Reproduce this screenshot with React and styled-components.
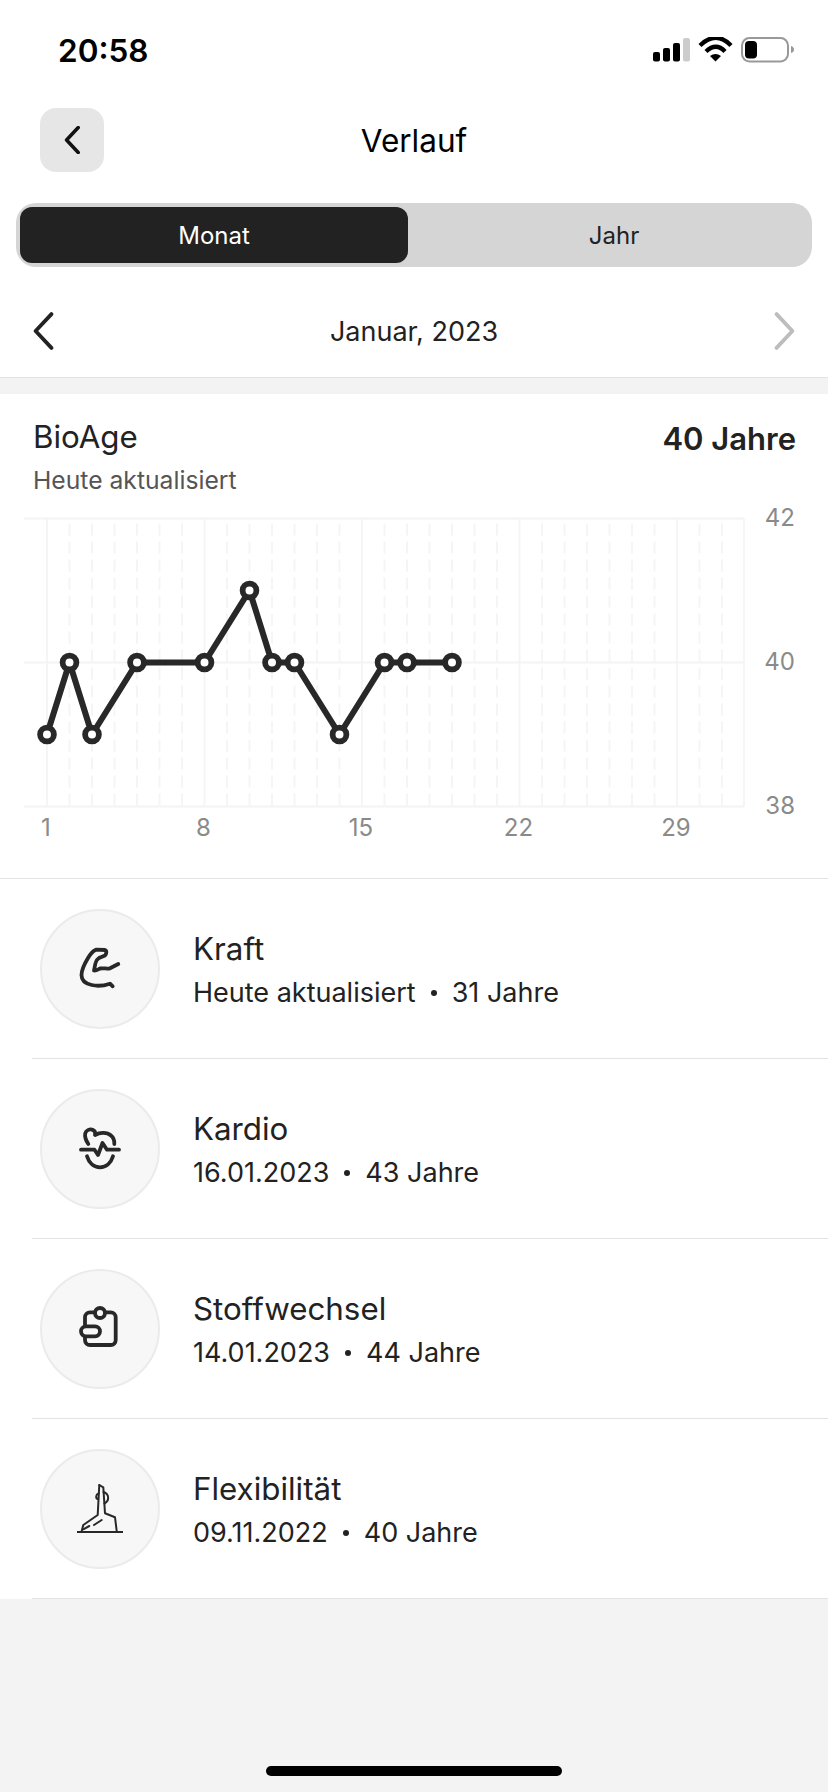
import React from 'react';
import styled, { createGlobalStyle } from 'styled-components';

const GlobalStyle = createGlobalStyle`
  html, body {
    margin: 0;
    padding: 0;
    background: #f3f3f3;
  }
  * {
    box-sizing: border-box;
  }
`;

const Page = styled.div`
  width: 828px;
  height: 1792px;
  overflow: hidden;
  display: flex;
  flex-direction: column;
  background: #f3f3f3;
  color: #222;
  font-family: Inter, "Liberation Sans", sans-serif;
`;

const TopBlock = styled.div`
  background: #fff;
  border-bottom: 1px solid #e3e3e3;
`;

const StatusBar = styled.div`
  height: 100px;
  padding: 26px 34px 0 58px;
  display: flex;
  justify-content: space-between;
  align-items: flex-start;
`;

const Time = styled.div`
  font-size: 31.5px;
  line-height: 50px;
  font-weight: 600;
  color: #000;
`;

const StatusIcons = styled.svg`
  display: block;
  margin-top: 11px;
`;

const Header = styled.div`
  height: 64px;
  margin: 8px 40px 0;
  position: relative;
  display: flex;
  align-items: center;
  justify-content: center;
`;

const BackButton = styled.button`
  position: absolute;
  left: 0;
  top: 0;
  width: 64px;
  height: 64px;
  border: 0;
  padding: 0;
  border-radius: 16px;
  background: #e6e6e6;
  display: flex;
  align-items: center;
  justify-content: center;
`;

const Title = styled.div`
  font-size: 31.5px;
  font-weight: 420;
  color: #000;
`;

const Segments = styled.div`
  height: 64px;
  margin: 31px 16px 0;
  padding: 4px;
  border-radius: 20px;
  background: #d5d5d5;
  display: flex;
`;

const Segment = styled.div`
  width: ${(p) => (p.$active ? '388px' : '400px')};
  padding-left: ${(p) => (p.$active ? '0' : '12px')};
  border-radius: 12px;
  display: flex;
  align-items: center;
  justify-content: center;
  font-size: 24px;
  background: ${(p) => (p.$active ? '#222' : 'transparent')};
  color: ${(p) => (p.$active ? '#fff' : '#222')};
`;

const DateRow = styled.div`
  height: 110px;
  padding: 18px 32px 0;
  display: flex;
  align-items: center;
  justify-content: space-between;
  font-size: 27px;
  color: #222;
`;

const Card = styled.section`
  margin-top: 16px;
  background: #fff;
  height: 485px;
  border-bottom: 1px solid #e3e3e3;
  display: flex;
  flex-direction: column;
`;

const CardHead = styled.div`
  padding: 24px 32px 0 33px;
  height: 124px;
  display: flex;
  justify-content: space-between;
  align-items: flex-start;
`;

const CardTitle = styled.div`
  font-size: 31.3px;
  line-height: 38px;
  font-weight: 420;
`;

const CardSub = styled.div`
  margin-top: 8px;
  font-size: 24.7px;
  line-height: 32px;
  color: #555;
`;

const CardValue = styled.div`
  margin-top: 2px;
  font-size: 31px;
  line-height: 38px;
  font-weight: 600;
`;

const ChartSvg = styled.svg`
  display: block;
  overflow: visible;
`;

const AxisText = styled.text`
  font-family: Inter, "Liberation Sans", sans-serif;
  font-size: 24px;
  fill: #8a8a8a;
`;

const List = styled.div`
  background: #fff;
  padding-left: 32px;
`;

const Row = styled.div`
  height: 180px;
  padding-left: 8px;
  border-bottom: 1px solid #e3e3e3;
  display: flex;
  align-items: center;
  gap: 33px;
`;

const IconCircle = styled.div`
  width: 120px;
  height: 120px;
  border-radius: 50%;
  background: #f7f7f7;
  border: 2px solid #ebebeb;
  display: flex;
  align-items: center;
  justify-content: center;
  flex-shrink: 0;
`;

const RowText = styled.div`
  margin-top: 2px;
`;

const RowTitle = styled.div`
  font-size: 31.3px;
  line-height: 40px;
  font-weight: 420;
`;

const RowSub = styled.div`
  margin-top: 6px;
  font-size: 27px;
  line-height: 36px;
  display: flex;
  align-items: center;
`;

const Dot = styled.span`
  width: 6px;
  height: 6px;
  border-radius: 50%;
  background: #222;
  margin: 0 15px;
`;

const Spacer = styled.div`
  flex: 1;
`;

const HomeIndicator = styled.div`
  width: 296px;
  height: 10px;
  border-radius: 5px;
  background: #000;
  margin: 0 auto 16px;
`;

const StatusGlyphs = () => (
  <StatusIcons width="141" height="26" viewBox="653 37 141 26">
    <rect x="653" y="52" width="7" height="9.5" rx="2" fill="#000" />
    <rect x="663" y="48" width="7" height="13.5" rx="2" fill="#000" />
    <rect x="673" y="43" width="7" height="18.5" rx="2" fill="#000" />
    <rect x="683" y="38" width="7" height="23.5" rx="2" fill="#ccc" />
    <path d="M700 45.5 Q716 30 731 45.5" fill="none" stroke="#000" strokeWidth="4.4" />
    <path d="M706 51.5 Q716 42 725 51.5" fill="none" stroke="#000" strokeWidth="4.4" />
    <path d="M710 56 Q715.500 52 721 56 L715.500 61.500 Z" fill="#000" />
    <rect x="742" y="38" width="46" height="23.500" rx="7.500" fill="none" stroke="#999" strokeWidth="2" />
    <rect x="745" y="41" width="12" height="17.500" rx="4" fill="#000" />
    <path d="M791 46 Q794 47 794 49.500 Q794 52 791 53 Z" fill="#999" />
  </StatusIcons>
);

const Chevron = ({ left, color, width, height, stroke }) => (
  <svg width={width} height={height} viewBox="0 0 20 36">
    <path
      d={left ? 'M18 2 L3 18 L18 34' : 'M2 2 L17 18 L2 34'}
      fill="none"
      stroke={color}
      strokeWidth={stroke}
      strokeLinecap="round"
      strokeLinejoin="round"
    />
  </svg>
);

const days = [1, 2, 3, 5, 8, 10, 11, 12, 14, 16, 17, 19];
const values = [39, 40, 39, 40, 40, 41, 40, 40, 39, 40, 40, 40];
const dayX = (d) => 47 + (d - 1) * 22.5;
const valueY = (v) => 144 - (v - 40) * 72;
const majorDays = [1, 8, 15, 22, 29];

const Chart = () => {
  const grid = [];
  for (let d = 1; d <= 31; d++) {
    const major = majorDays.includes(d);
    grid.push(
      <line
        key={d}
        x1={dayX(d)}
        x2={dayX(d)}
        y1={major ? 0 : 5}
        y2={288}
        stroke="#f5f5f5"
        strokeWidth="2"
        strokeDasharray={major ? undefined : '12 6'}
      />
    );
  }
  const points = days.map((d, i) => `${dayX(d)},${valueY(values[i])}`).join(' ');

  return (
    <ChartSvg width="828" height="346" viewBox="0 0 828 346">
      <g transform="translate(0 0.5)">
        {grid}
        <line x1="744" x2="744" y1="0" y2="288" stroke="#f5f5f5" strokeWidth="2" />
        {[0, 144, 288].map((y) => (
          <line key={y} x1="24" x2="744" y1={y} y2={y} stroke="#f4f4f4" strokeWidth="2" />
        ))}
        <polyline points={points} fill="none" stroke="#282828" strokeWidth="6" strokeLinejoin="round" />
        {days.map((d, i) => (
          <circle key={d} cx={dayX(d)} cy={valueY(values[i])} r="6.9" fill="#fff" stroke="#282828" strokeWidth="5.8" />
        ))}
      </g>
      {[['42', 8], ['40', 152], ['38', 296]].map(([t, y]) => (
        <AxisText key={t} x="795" y={y} textAnchor="end">{t}</AxisText>
      ))}
      {majorDays.map((d) => (
        <AxisText key={d} x={d === 1 ? 46 : dayX(d) - 1} y="318" textAnchor="middle">{d}</AxisText>
      ))}
    </ChartSvg>
  );
};

const iconStroke = {
  fill: 'none',
  stroke: '#282828',
  strokeLinecap: 'round',
  strokeLinejoin: 'round',
};

const KraftIcon = () => (
  <svg width="48" height="48" viewBox="0 0 48 48">
    <path
      {...iconStroke}
      strokeWidth="3.8"
      d="M36.700 41.300 L34 38.700 C28 40.700 21 41.300 15.700 40 C9 38.500 5.500 35 5.500 30 C5.500 24 9 18 12 13 C14 9.500 17 6 20 4.700 L29 5 C31 5.500 30.500 9 29 10.500 L23 13 C21.500 14 20 15 19.500 18 L18 25.500 C20 26 22 24.500 24 23.500 C28 23 31 24 34 23.300 L42.300 19"
    />
  </svg>
);

const KardioIcon = () => (
  <svg width="48" height="48" viewBox="0 0 48 48">
    <g {...iconStroke} strokeWidth="3.8">
      <path d="M12.300 19 C10 15.500 8.500 12 9.200 8.500 C10 5 14 3.500 17 5 C19 6 19.500 8 19 10 C24 7 31 7 35 10.500 C38 13 38.500 16 38.300 19" />
      <path d="M5 24.700 H18.500 L22 30 L26.500 18 L31 24.700 H43" />
      <path d="M11 31.300 C13 38 18 42.300 24 42.300 C30 42.300 35 38 37 31.300" />
    </g>
  </svg>
);

const StoffwechselIcon = () => (
  <svg width="48" height="48" viewBox="0 0 48 48">
    <g {...iconStroke} strokeWidth="3.8">
      <rect x="9" y="7.300" width="30.700" height="32.700" rx="5" />
      <circle cx="24" cy="8" r="5" fill="#f7f7f7" />
      <rect x="5" y="21.300" width="19" height="10" rx="5" fill="#f7f7f7" />
    </g>
  </svg>
);

const FlexIcon = () => (
  <svg width="48" height="48" viewBox="0 0 48 48" overflow="visible">
    <g {...iconStroke} strokeWidth="2">
      <path strokeLinecap="butt" d="M1 47 H47" />
      <path d="M23.300 0 L21.700 30 L7.300 40 L5.700 46" />
      <path d="M23.300 0 L27.300 2.300 L29 28.300 L39 32.300 L40.700 46" />
      <path d="M22.500 8.500 C19.500 9.500 19.500 13.500 22 14" />
      <path d="M27.500 7 C33.500 9 33.500 16 28.500 18.500" />
      <path d="M18 40 L25.700 35" />
      <path d="M7.300 44.300 L13.300 41" />
    </g>
  </svg>
);

const rows = [
  { title: 'Kraft', date: 'Heute aktualisiert', age: '31 Jahre', Icon: KraftIcon },
  { title: 'Kardio', date: '16.01.2023', age: '43 Jahre', Icon: KardioIcon },
  { title: 'Stoffwechsel', date: '14.01.2023', age: '44 Jahre', Icon: StoffwechselIcon },
  { title: 'Flexibilität', date: '09.11.2022', age: '40 Jahre', Icon: FlexIcon },
];

export default function App() {
  return (
    <Page>
      <GlobalStyle />
      <TopBlock>
        <StatusBar>
          <Time>20:58</Time>
          <StatusGlyphs />
        </StatusBar>
        <Header>
          <BackButton aria-label="Zurück">
            <Chevron left color="#111" width="16" height="28" stroke="4.5" />
          </BackButton>
          <Title>Verlauf</Title>
        </Header>
        <Segments>
          <Segment $active>Monat</Segment>
          <Segment>Jahr</Segment>
        </Segments>
        <DateRow>
          <Chevron left color="#222" width="22" height="38" stroke="3.6" />
          <span>Januar, 2023</span>
          <Chevron color="#bdbdbd" width="22" height="38" stroke="3.6" />
        </DateRow>
      </TopBlock>
      <Card>
        <CardHead>
          <div>
            <CardTitle>BioAge</CardTitle>
            <CardSub>Heute aktualisiert</CardSub>
          </div>
          <CardValue>40 Jahre</CardValue>
        </CardHead>
        <Chart />
      </Card>
      <List>
        {rows.map(({ title, date, age, Icon }) => (
          <Row key={title}>
            <IconCircle>
              <Icon />
            </IconCircle>
            <RowText>
              <RowTitle>{title}</RowTitle>
              <RowSub>
                {date}
                <Dot />
                {age}
              </RowSub>
            </RowText>
          </Row>
        ))}
      </List>
      <Spacer />
      <HomeIndicator />
    </Page>
  );
}
